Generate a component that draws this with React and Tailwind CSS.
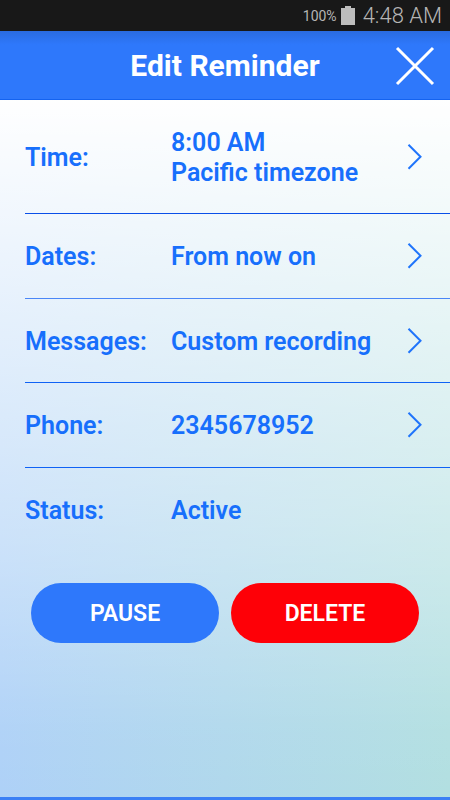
import React from "react";

const rows = [
  { label: "Time:", lines: ["8:00 AM", "Pacific timezone"], height: "h-[114px]", line: "border-[#0a4fe8]" },
  { label: "Dates:", lines: ["From now on"], height: "h-[85px]", line: "border-[#4a86f7]" },
  { label: "Messages:", lines: ["Custom recording"], height: "h-[84px]", line: "border-[#0f62f5]" },
  { label: "Phone:", lines: ["2345678952"], height: "h-[85px]", line: "border-[#0f62f5]" },
];

function StatusBar() {
  return (
    <div className="flex h-[31px] items-center justify-end bg-[#181818] pr-2 text-[#b5b5b5]">
      <span className="pt-px text-[14px]">100%</span>
      <svg className="ml-1 h-5 w-[14px]" viewBox="0 0 14 20" fill="#bdbdbd" aria-hidden="true">
        <path d="M4 0h6v2h4v17H0V2h4z" />
      </svg>
      <span className="ml-2 text-[22px] leading-[27px] font-light">4:48 AM</span>
    </div>
  );
}

function Chevron() {
  return (
    <svg className="mr-7 h-7 w-4 shrink-0" viewBox="0 0 16 28" fill="none" stroke="#1f74fb" strokeWidth="2" aria-hidden="true">
      <path d="M2.500 0.700L14.500 12.700L2.500 24.700" />
    </svg>
  );
}

export default function App() {
  return (
    <div className="flex min-h-screen flex-col border-b-3 border-[#3b80f5] bg-[linear-gradient(180deg,#ffffff_12%,rgba(255,255,255,0.72)_36%,rgba(255,255,255,0.35)_70%,rgba(255,255,255,0.04)_92%,rgba(255,255,255,0)_100%),linear-gradient(90deg,#aed1f7,#b2dfe1)] font-['Roboto',sans-serif] text-[#176ffc]">
      <StatusBar />
      <header className="grid h-[69px] grid-cols-[1fr_auto_1fr] items-center border-b border-[#1463f0] bg-[linear-gradient(180deg,#2a6be0,#2e78fb_20%)] pt-px text-white">
        <h1 className="col-start-2 text-[30px] font-bold">Edit Reminder</h1>
        <button type="button" aria-label="Close" className="mr-[15px] justify-self-end">
          <svg className="size-10" viewBox="0 0 40 40" fill="none" stroke="white" strokeWidth="3">
            <path d="M2 2L38 38M38 2L2 38" />
          </svg>
        </button>
      </header>

      <main className="pl-[25px] text-[25px] leading-[30px] font-semibold">
        {rows.map((row) => (
          <button
            key={row.label}
            type="button"
            className={`flex w-full items-center border-b pt-[2px] text-left ${row.height} ${row.line}`}
          >
            <span className="w-[146px] shrink-0">{row.label}</span>
            <span className="flex-1">
              {row.lines.map((line) => (
                <span key={line} className="block">{line}</span>
              ))}
            </span>
            <Chevron />
          </button>
        ))}
        <div className="flex h-[85px] items-center pt-px">
          <span className="w-[146px] shrink-0">Status:</span>
          <span>Active</span>
        </div>
      </main>

      <div className="flex gap-3 px-[31px] pt-[30px] pb-8 text-[23px] font-semibold text-white">
        <button type="button" className="h-[60px] flex-1 rounded-full bg-[#2e78fb] pt-[2px]">
          PAUSE
        </button>
        <button type="button" className="h-[60px] flex-1 rounded-full bg-[#fe0007] pt-[2px]">
          DELETE
        </button>
      </div>
    </div>
  );
}
